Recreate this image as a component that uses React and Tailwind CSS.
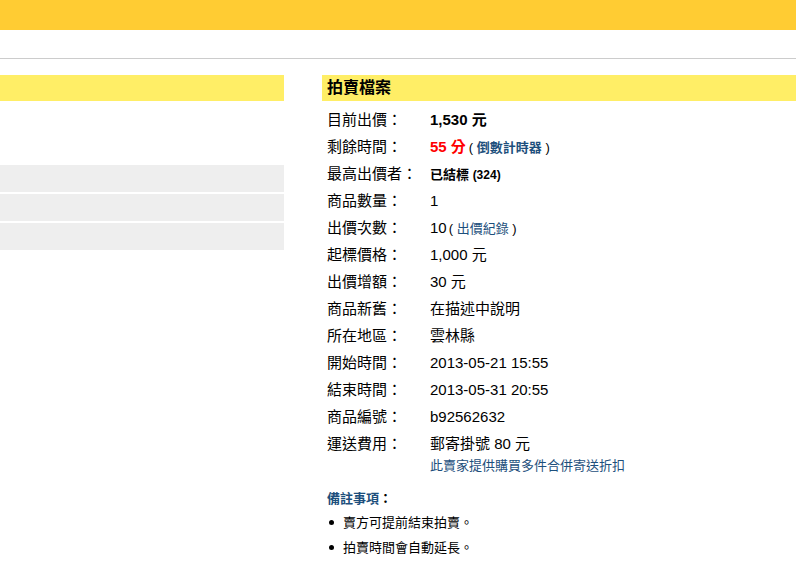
import React from "react";

const rows = [
  { label: "目前出價：", value: <span className="font-bold">1,530 元</span> },
  {
    label: "剩餘時間：",
    value: (
      <>
        <span className="font-bold text-[#ff0000]">55 分</span>
        <span className="text-[13px] ml-[3px]">
          ( <span className="font-bold text-[#1d4f7c]">倒數計時器</span> )
        </span>
      </>
    ),
  },
  {
    label: "最高出價者：",
    value: (
      <span className="text-[13px] font-bold">
        已結標 <span className="text-[12px]">(324)</span>
      </span>
    ),
  },
  { label: "商品數量：", value: "1" },
  {
    label: "出價次數：",
    value: (
      <>
        10
        <span className="text-[13px] ml-[2px]">
          ( <span className="text-[#1d4f7c]">出價紀錄</span> )
        </span>
      </>
    ),
  },
  { label: "起標價格：", value: "1,000 元" },
  { label: "出價增額：", value: "30 元" },
  { label: "商品新舊：", value: "在描述中說明" },
  { label: "所在地區：", value: "雲林縣" },
  { label: "開始時間：", value: "2013-05-21 15:55" },
  { label: "結束時間：", value: "2013-05-31 20:55" },
  { label: "商品編號：", value: "b92562632" },
];

export default function App() {
  return (
    <div className="w-[796px] h-[564px] overflow-hidden bg-white text-black font-['Liberation_Sans','Noto_Sans_CJK_TC',sans-serif]">
      <div className="h-[30px] bg-[#ffcc33]" />
      <div className="h-[28px]" />
      <div className="h-px bg-[#cccccc]" />

      <div className="flex pt-[16px] gap-[38px]">
        {/* left column */}
        <div className="w-[284px] shrink-0">
          <div className="h-[26px] bg-[#ffee66]" />
          <div className="mt-[64px] flex flex-col gap-[2px]">
            <div className="h-[27px] bg-[#eeeeee]" />
            <div className="h-[27px] bg-[#eeeeee]" />
            <div className="h-[27px] bg-[#eeeeee]" />
          </div>
        </div>

        {/* auction info */}
        <div className="flex-1">
          <div className="h-[26px] bg-[#ffee66] pl-[5px] text-[16px] font-bold leading-[26px]">
            拍賣檔案
          </div>

          <div className="pt-[6px] pl-[5px] text-[15px]">
            {rows.map((r) => (
              <div key={r.label} className="flex h-[27px] items-center">
                <div className="w-[103px] shrink-0">{r.label}</div>
                <div>{r.value}</div>
              </div>
            ))}
            <div className="flex">
              <div className="w-[103px] shrink-0 leading-[26px]">運送費用：</div>
              <div>
                <div className="leading-[26px]">郵寄掛號 80 元</div>
                <div className="text-[13px] leading-[17px] text-[#1d4f7c]">
                  此賣家提供購買多件合併寄送折扣
                </div>
              </div>
            </div>

            <div className="mt-[15px] text-[13px] leading-[20px] font-bold">
              <span className="text-[#1d4f7c]">備註事項</span>：
            </div>
            <ul className="text-[13px] mt-[1px]">
              <li className="flex items-center h-[25px]">
                <span className="w-[5px] h-[5px] rounded-full bg-black ml-[2px] mr-[9px]" />
                賣方可提前結束拍賣。
              </li>
              <li className="flex items-center h-[25px]">
                <span className="w-[5px] h-[5px] rounded-full bg-black ml-[2px] mr-[9px]" />
                拍賣時間會自動延長。
              </li>
            </ul>
          </div>
        </div>
      </div>
    </div>
  );
}
